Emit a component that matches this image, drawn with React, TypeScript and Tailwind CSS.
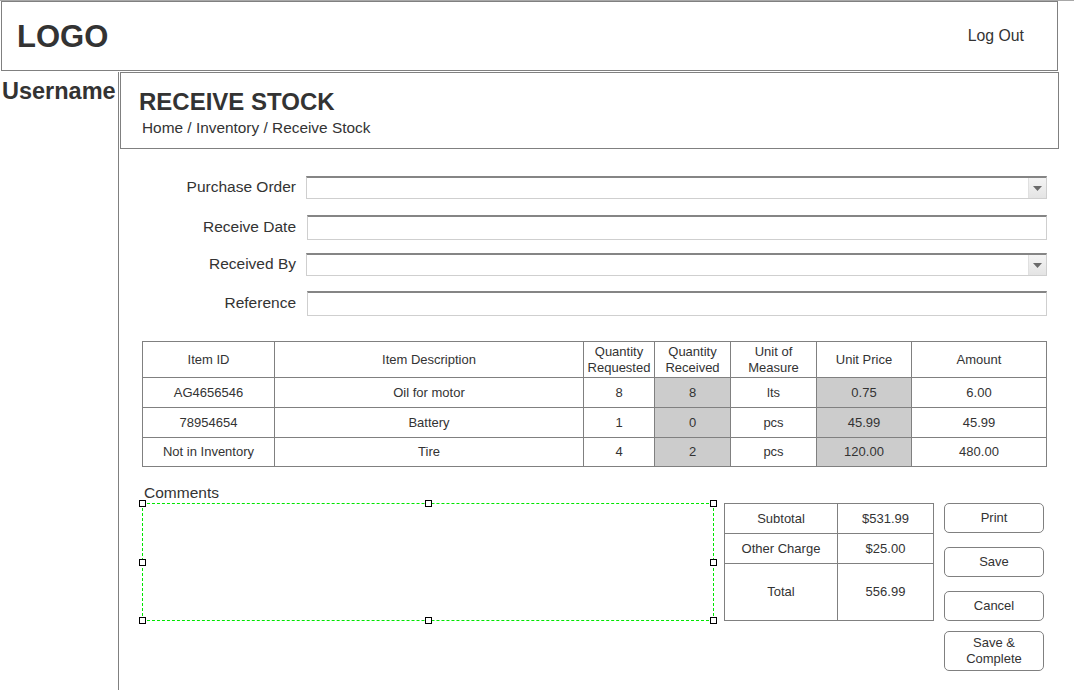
import React from "react";

const FONT = "font-['Liberation_Sans',Arial,sans-serif]";

interface Item {
  id: string;
  description: string;
  requested: string;
  received: string;
  unit: string;
  price: string;
  amount: string;
}

const items: Item[] = [
  { id: "AG4656546", description: "Oil for motor", requested: "8", received: "8", unit: "lts", price: "0.75", amount: "6.00" },
  { id: "78954654", description: "Battery", requested: "1", received: "0", unit: "pcs", price: "45.99", amount: "45.99" },
  { id: "Not in Inventory", description: "Tire", requested: "4", received: "2", unit: "pcs", price: "120.00", amount: "480.00" },
];

function TextInput() {
  return (
    <div className="w-[740px] h-[25px] border border-[#cfcfcf] border-t-2 border-t-[#858585] bg-white" />
  );
}

function SelectInput() {
  return (
    <div className="w-[741px] h-[23px] flex border border-[#cfcfcf] border-t-2 border-t-[#858585] bg-white">
      <div className="flex-1" />
      <div className="w-[18px] h-full bg-gradient-to-b from-[#f4f4f4] to-[#e4e4e4] border-l border-[#e0e0e0] flex items-center justify-center">
        <svg width="9" height="5" viewBox="0 0 9 5">
          <path d="M0 0 H9 L4.5 5 Z" fill="#6a6a6a" />
        </svg>
      </div>
    </div>
  );
}

function FormRow({ label, children, className }: { label: string; children: React.ReactNode; className: string }) {
  return (
    <div className={`flex items-center ${className}`}>
      <div className="w-[176px] -mt-[2px] text-right text-[15.5px] leading-[15px] text-[#333]">{label}</div>
      <div className="ml-[10px]">{children}</div>
    </div>
  );
}

function Handle({ className }: { className: string }) {
  return <div className={`absolute w-[7px] h-[7px] bg-white border border-black ${className}`} />;
}

function ActionButton({ children, className }: { children: React.ReactNode; className: string }) {
  return (
    <button className={`w-[100px] rounded-[5px] border border-[#808080] bg-white text-[13px] leading-[16px] text-[#333] ${className}`}>
      {children}
    </button>
  );
}

export default function App() {
  const cell = "border border-[#808080] text-center";
  return (
    <div className={`w-[1074px] h-[690px] bg-white overflow-hidden text-[#333] ${FONT}`}>
      <div className="h-px bg-[#a8a8a8]" />

      {/* Header */}
      <header className="ml-px w-[1057px] h-[70px] border border-[#808080] flex items-start justify-between pl-[15px] pr-[33px]">
        <div className="mt-[19px] text-[31px] leading-[32px] font-bold">LOGO</div>
        <div className="mt-[26px] text-[15.8px] leading-[16px]">Log Out</div>
      </header>

      <div className="flex mt-px h-[618px]">
        {/* Sidebar */}
        <aside className="w-[119px] shrink-0 border-r border-[#808080] pt-[8px] pl-[2px]">
          <div className="text-[23.5px] leading-[23px] font-bold">Username</div>
        </aside>

        <main className="flex-1 pl-px">
          {/* Title */}
          <div className="w-[939px] h-[77px] border border-[#808080] pt-[17px] pl-[18px]">
            <h1 className="text-[24px] leading-[24px] font-bold">RECEIVE STOCK</h1>
            <div className="mt-[6px] ml-[3px] text-[15.4px] leading-[15px]">Home / Inventory / Receive Stock</div>
          </div>

          {/* Form */}
          <FormRow label="Purchase Order" className="mt-[27px]">
            <SelectInput />
          </FormRow>
          <FormRow label="Receive Date" className="mt-[16px]">
            <div className="ml-px">
              <TextInput />
            </div>
          </FormRow>
          <FormRow label="Received By" className="mt-[13px]">
            <SelectInput />
          </FormRow>
          <FormRow label="Reference" className="mt-[15px]">
            <div className="ml-px">
              <TextInput />
            </div>
          </FormRow>

          {/* Items table */}
          <table className="ml-[22px] mt-[25px] border-collapse table-fixed w-[904px] text-[13px] leading-[16px]">
            <colgroup>
              <col className="w-[132px]" />
              <col className="w-[309px]" />
              <col className="w-[71px]" />
              <col className="w-[76px]" />
              <col className="w-[86px]" />
              <col className="w-[95px]" />
              <col className="w-[135px]" />
            </colgroup>
            <thead>
              <tr className="h-[36px]">
                <th className={`${cell} font-normal`}>Item ID</th>
                <th className={`${cell} font-normal`}>Item Description</th>
                <th className={`${cell} font-normal`}>Quantity<br />Requested</th>
                <th className={`${cell} font-normal`}>Quantity<br />Received</th>
                <th className={`${cell} font-normal`}>Unit of<br />Measure</th>
                <th className={`${cell} font-normal`}>Unit Price</th>
                <th className={`${cell} font-normal`}>Amount</th>
              </tr>
            </thead>
            <tbody>
              {items.map((item, i) => (
                <tr key={item.id} className={i === 2 ? "h-[29px]" : "h-[30px]"}>
                  <td className={cell}>{item.id}</td>
                  <td className={cell}>{item.description}</td>
                  <td className={cell}>{item.requested}</td>
                  <td className={`${cell} bg-[#cccccc]`}>{item.received}</td>
                  <td className={cell}>{item.unit}</td>
                  <td className={`${cell} bg-[#cccccc]`}>{item.price}</td>
                  <td className={cell}>{item.amount}</td>
                </tr>
              ))}
            </tbody>
          </table>

          {/* Comments, totals, actions */}
          <div className="ml-[24px] mt-[18px] text-[15.5px] leading-[15px]">Comments</div>
          <div className="flex items-start ml-[22px] mt-[3px]">
            <div className="relative w-[572px] h-[118px] border border-dashed border-[#00e600]">
              <Handle className="-left-[4px] -top-[4px]" />
              <Handle className="left-[282px] -top-[4px]" />
              <Handle className="-right-[4px] -top-[4px]" />
              <Handle className="-left-[4px] top-[55px]" />
              <Handle className="-right-[4px] top-[55px]" />
              <Handle className="-left-[4px] -bottom-[4px]" />
              <Handle className="left-[282px] -bottom-[4px]" />
              <Handle className="-right-[4px] -bottom-[4px]" />
            </div>

            <table className="ml-[10px] border-collapse table-fixed w-[209px] text-[13px] leading-[16px]">
              <colgroup>
                <col className="w-[113px]" />
                <col className="w-[96px]" />
              </colgroup>
              <tbody>
                <tr className="h-[30px]">
                  <td className={cell}>Subtotal</td>
                  <td className={cell}>$531.99</td>
                </tr>
                <tr className="h-[30px]">
                  <td className={cell}>Other Charge</td>
                  <td className={cell}>$25.00</td>
                </tr>
                <tr className="h-[57px]">
                  <td className={cell}>Total</td>
                  <td className={cell}>556.99</td>
                </tr>
              </tbody>
            </table>

            <div className="ml-[10px] flex flex-col">
              <ActionButton className="h-[30px]">Print</ActionButton>
              <ActionButton className="h-[30px] mt-[14px]">Save</ActionButton>
              <ActionButton className="h-[30px] mt-[14px]">Cancel</ActionButton>
              <ActionButton className="h-[40px] mt-[10px]">
                Save &amp;
                <br />
                Complete
              </ActionButton>
            </div>
          </div>
        </main>
      </div>
    </div>
  );
}
